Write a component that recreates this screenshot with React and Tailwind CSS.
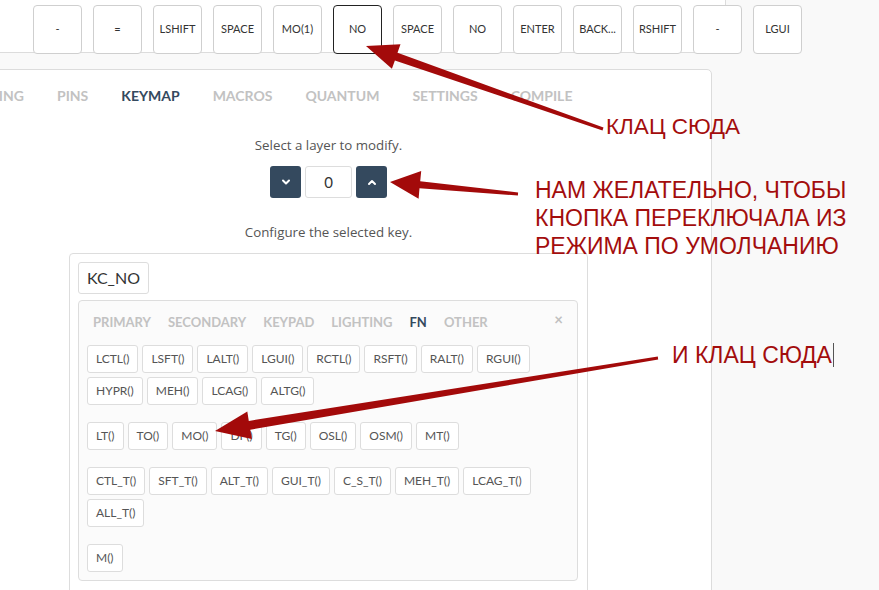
import React from 'react';

const topKeys = ['-', '=', 'LSHIFT', 'SPACE', 'MO(1)', 'NO', 'SPACE', 'NO', 'ENTER', 'BACK...', 'RSHIFT', '-', 'LGUI'];

const mainTabs = ['WIRING', 'PINS', 'KEYMAP', 'MACROS', 'QUANTUM', 'SETTINGS', 'COMPILE'];
const keyTabs = ['PRIMARY', 'SECONDARY', 'KEYPAD', 'LIGHTING', 'FN', 'OTHER'];

const fnGroups = [
  [
    ['LCTL()', 'LSFT()', 'LALT()', 'LGUI()', 'RCTL()', 'RSFT()', 'RALT()', 'RGUI()'],
    ['HYPR()', 'MEH()', 'LCAG()', 'ALTG()'],
  ],
  [['LT()', 'TO()', 'MO()', 'DF()', 'TG()', 'OSL()', 'OSM()', 'MT()']],
  [
    ['CTL_T()', 'SFT_T()', 'ALT_T()', 'GUI_T()', 'C_S_T()', 'MEH_T()', 'LCAG_T()'],
    ['ALL_T()'],
  ],
  [['M()']],
];

// tapered arrow: shaft gets thicker toward the head
function arrowPoints(tail, tip, headLen, headHalf, wTail, wHead) {
  const dx = tip[0] - tail[0];
  const dy = tip[1] - tail[1];
  const len = Math.hypot(dx, dy);
  const ux = dx / len;
  const uy = dy / len;
  const nx = -uy;
  const ny = ux;
  const bx = tip[0] - ux * headLen;
  const by = tip[1] - uy * headLen;
  const p = (x, y) => `${x.toFixed(1)},${y.toFixed(1)}`;
  return [
    p(tail[0] + nx * wTail / 2, tail[1] + ny * wTail / 2),
    p(bx + nx * wHead / 2, by + ny * wHead / 2),
    p(bx + nx * headHalf, by + ny * headHalf),
    p(tip[0], tip[1]),
    p(bx - nx * headHalf, by - ny * headHalf),
    p(bx - nx * wHead / 2, by - ny * wHead / 2),
    p(tail[0] - nx * wTail / 2, tail[1] - ny * wTail / 2),
  ].join(' ');
}

function Arrows() {
  return (
    <svg className="absolute inset-0 pointer-events-none" width="879" height="590" viewBox="0 0 879 590">
      <g fill="#a30a0a">
        <polygon points={arrowPoints([603, 129], [366, 46], 32, 13, 3, 8)} />
        <polygon points={arrowPoints([518, 194], [390, 182], 30, 14, 3, 7)} />
        <polygon points={arrowPoints([658, 358], [215, 431], 35, 14, 3, 9)} />
      </g>
    </svg>
  );
}

function Chevron({ up }) {
  return (
    <svg width="10" height="10" viewBox="0 0 10 10">
      <path
        d={up ? 'M2 7 L5 4 L8 7' : 'M2 3.5 L5 6.5 L8 3.5'}
        fill="none"
        stroke="white"
        strokeWidth="2"
        strokeLinecap="round"
        strokeLinejoin="round"
      />
    </svg>
  );
}

export default function App() {
  return (
    <div className="relative h-[590px] w-[879px] overflow-hidden bg-[#f9f9f9] font-['Lato',sans-serif]">
      {/* keyboard strip */}
      <div className="relative h-[69px]">
        <div className="absolute left-0 top-0 h-[53px] w-[726px] bg-white border-b border-r border-[#dcdcdc] rounded-br-[4px]" />
        <div className="relative flex gap-[11px] pl-[33px] pt-[5px]">
          {topKeys.map((k, i) => (
            <div
              key={i}
              className={`flex h-[49px] w-[49px] shrink-0 items-center justify-center rounded-[4px] border bg-white text-[11px] text-[#333] ${
                i === 5 ? 'border-[#222]' : 'border-[#cfcfcf]'
              }`}
            >
              {k}
            </div>
          ))}
        </div>
      </div>

      {/* main panel */}
      <div className="ml-[-55px] h-[560px] w-[767px] rounded-[5px] border border-[#dcdcdc] bg-white">
        <div className="flex gap-[33px] pl-[25px] pt-[16px] text-[14px] font-bold leading-[20px]">
          {mainTabs.map((t) => (
            <span key={t} className={t === 'KEYMAP' ? 'text-[#34495e]' : 'text-[#c2c2c2]'}>
              {t}
            </span>
          ))}
        </div>

        <div className="flex flex-col items-center">
          <p className="mt-[30px] font-['Open_Sans',sans-serif] text-[13.3px] leading-[18px] text-[#555]">
            Select a layer to modify.
          </p>
          <div className="mt-[12px] flex gap-[4px]">
            <button className="flex h-[32px] w-[31px] items-center justify-center rounded-[3px] bg-[#34495e]">
              <Chevron />
            </button>
            <div className="flex h-[32px] w-[47px] items-center justify-center rounded-[3px] border border-[#ddd] text-[15px] text-[#333]">
              0
            </div>
            <button className="flex h-[32px] w-[31px] items-center justify-center rounded-[3px] bg-[#34495e]">
              <Chevron up />
            </button>
          </div>
          <p className="mt-[25px] font-['Open_Sans',sans-serif] text-[13.3px] leading-[18px] text-[#555]">
            Configure the selected key.
          </p>

          <div className="mt-[12px] h-[400px] w-[519px] rounded-[4px] border border-[#ddd] p-[8px]">
            <div className="inline-flex h-[32px] items-center rounded-[3px] border border-[#ddd] px-[8px] text-[16px] text-[#333]">
              KC_NO
            </div>
            <div className="mt-[6px] mr-[1px] rounded-[4px] border border-[#ddd] bg-[#fbfbfb] px-[8px] pb-[8px]">
              <div className="relative flex gap-[17px] pl-[6px] pt-[12px] text-[13px] font-bold leading-[18px]">
                {keyTabs.map((t) => (
                  <span key={t} className={t === 'FN' ? 'text-[#34495e]' : 'text-[#c2c2c2]'}>
                    {t}
                  </span>
                ))}
                <span className="absolute right-[6px] top-[9px] text-[15px] font-bold text-[#c0c0c0]">×</span>
              </div>
              <div className="mt-[14px] flex flex-col gap-[17px]">
                {fnGroups.map((g, gi) => (
                  <div key={gi} className="flex flex-col gap-[4px]">
                    {g.map((row, ri) => (
                      <div key={ri} className="flex gap-[4px]">
                        {row.map((b) => (
                          <div
                            key={b}
                            className="flex h-[28px] items-center rounded-[3px] border border-[#ddd] bg-white px-[8px] text-[12px] text-[#555]"
                          >
                            {b}
                          </div>
                        ))}
                      </div>
                    ))}
                  </div>
                ))}
              </div>
            </div>
          </div>
        </div>
      </div>

      <Arrows />

      {/* annotations */}
      <div className="absolute left-[606px] top-[113px] font-['Liberation_Sans',Arial,sans-serif] text-[22.5px] leading-[28px] text-[#a30d0d]">
        КЛАЦ СЮДА
      </div>
      <div className="absolute left-[535px] top-[176px] font-['Liberation_Sans',Arial,sans-serif] text-[23px] leading-[28px] text-[#a30d0d]">
        <div>НАМ ЖЕЛАТЕЛЬНО, ЧТОБЫ</div>
        <div>КНОПКА ПЕРЕКЛЮЧАЛА ИЗ</div>
        <div>РЕЖИМА ПО УМОЛЧАНИЮ</div>
      </div>
      <div className="absolute left-[672px] top-[341px] flex items-center font-['Liberation_Sans',Arial,sans-serif] text-[23px] leading-[28px] text-[#a30d0d]">
        И КЛАЦ СЮДА
        <span className="ml-[1px] inline-block h-[24px] w-[1px] bg-[#555]" />
      </div>
    </div>
  );
}
